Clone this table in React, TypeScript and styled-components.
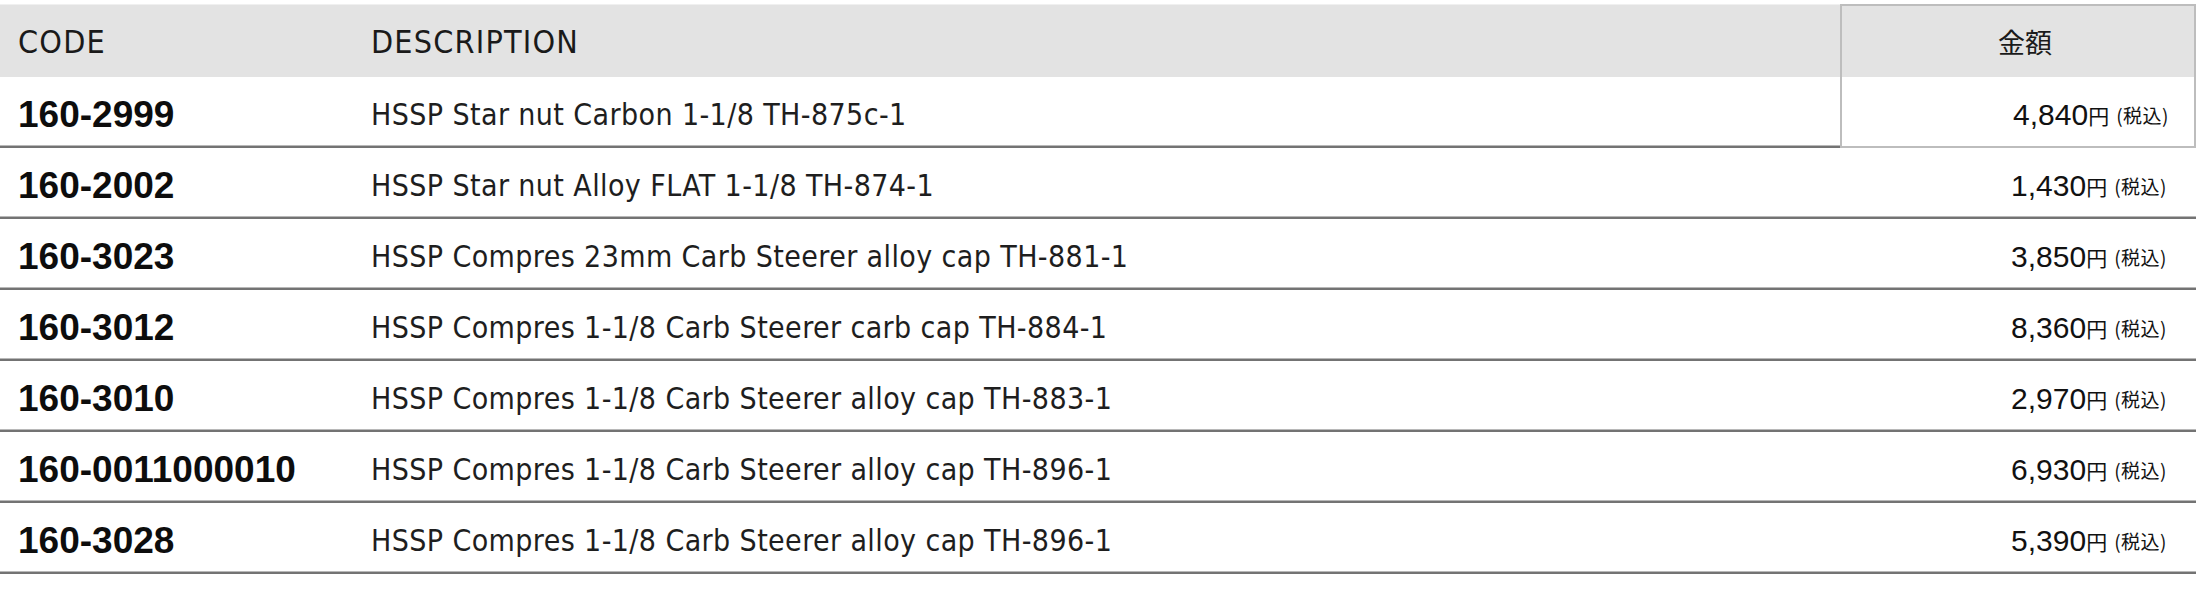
import styled, { createGlobalStyle } from 'styled-components'

const GlobalStyle = createGlobalStyle`
  html, body {
    margin: 0;
    padding: 0;
    background: #fff;
  }
  body {
    font-family: "Liberation Sans", Arial, sans-serif;
    color: #111;
  }
`

const COLUMNS = '353px 1487px 356px'

const Table = styled.div`
  width: 2196px;
  padding-top: 4px;
`

const HeadRow = styled.div`
  display: grid;
  grid-template-columns: ${COLUMNS};
  height: 73px;
  background: #e3e3e3;
  border-top: 1px solid #f0f0f0;
  box-sizing: border-box;
`

const HeadCell = styled.div<{ $boxed?: boolean }>`
  display: flex;
  align-items: center;
  padding: 1px 0 0 18px;
  font-family: "Liberation Sans Narrow", "DejaVu Sans Condensed", "Liberation Sans", sans-serif;
  font-size: 32px;
  letter-spacing: 1.2px;
  color: #1a1a1a;
  box-sizing: border-box;
  ${(p) =>
    p.$boxed &&
    `
    justify-content: center;
    padding: 0 0 0 14px;
    border: 2px solid #bdbdbd;
    border-bottom: none;
    margin-top: -1px;
    font-family: "Noto Sans CJK JP", sans-serif;
    font-size: 27px;
    letter-spacing: 0;
  `}
`

const Row = styled.div`
  display: grid;
  grid-template-columns: ${COLUMNS};
  height: 71px;
`

const Cell = styled.div`
  display: flex;
  align-items: center;
  padding: 6px 0 0 18px;
  border-bottom: 2px solid #737373;
  box-shadow: inset 0 -1px 0 #b8b8b8;
  box-sizing: border-box;
`

const Code = styled(Cell)`
  font-family: "Liberation Sans", Arial, sans-serif;
  font-weight: 700;
  font-size: 37px;
  color: #0d0d0d;
`

const Description = styled(Cell)`
  font-family: "Liberation Sans Narrow", "DejaVu Sans Condensed", "Liberation Sans", sans-serif;
  font-size: 30px;
  letter-spacing: 0.4px;
  color: #1e1e1e;
`

const PriceCell = styled(Cell)<{ $boxed?: boolean }>`
  justify-content: flex-end;
  padding-left: 0;
  padding-right: 29px;
  ${(p) =>
    p.$boxed &&
    `
    padding-right: 25px;
    border: 2px solid #bdbdbd;
    border-top: none;
    box-shadow: none;
  `}
`

const Amount = styled.span`
  font-family: "Liberation Sans", Arial, sans-serif;
  font-size: 30px;
  color: #111;
`

const Yen = styled.span`
  font-family: "Noto Sans CJK JP", sans-serif;
  font-size: 21px;
  margin-right: 7px;
`

const Tax = styled.span`
  font-family: "Noto Sans CJK JP", sans-serif;
  font-size: 19px;
  letter-spacing: 0.5px;
`

const items = [
  { code: '160-2999', desc: 'HSSP Star nut Carbon 1-1/8 TH-875c-1', price: '4,840' },
  { code: '160-2002', desc: 'HSSP Star nut Alloy FLAT 1-1/8 TH-874-1', price: '1,430' },
  { code: '160-3023', desc: 'HSSP Compres 23mm Carb Steerer alloy cap TH-881-1', price: '3,850' },
  { code: '160-3012', desc: 'HSSP Compres 1-1/8 Carb Steerer carb cap TH-884-1', price: '8,360' },
  { code: '160-3010', desc: 'HSSP Compres 1-1/8 Carb Steerer alloy cap TH-883-1', price: '2,970' },
  { code: '160-0011000010', desc: 'HSSP Compres 1-1/8 Carb Steerer alloy cap TH-896-1', price: '6,930' },
  { code: '160-3028', desc: 'HSSP Compres 1-1/8 Carb Steerer alloy cap TH-896-1', price: '5,390' },
]

const App = () => {
  return (
    <>
      <GlobalStyle />
      <Table>
        <HeadRow>
          <HeadCell>CODE</HeadCell>
          <HeadCell>DESCRIPTION</HeadCell>
          <HeadCell $boxed>金額</HeadCell>
        </HeadRow>
        {items.map((item, index) => (
          <Row key={index}>
            <Code>{item.code}</Code>
            <Description>{item.desc}</Description>
            <PriceCell $boxed={index === 0}>
              <Amount>{item.price}</Amount>
              <Yen>円</Yen>
              <Tax>(税込)</Tax>
            </PriceCell>
          </Row>
        ))}
      </Table>
    </>
  )
}

export default App
